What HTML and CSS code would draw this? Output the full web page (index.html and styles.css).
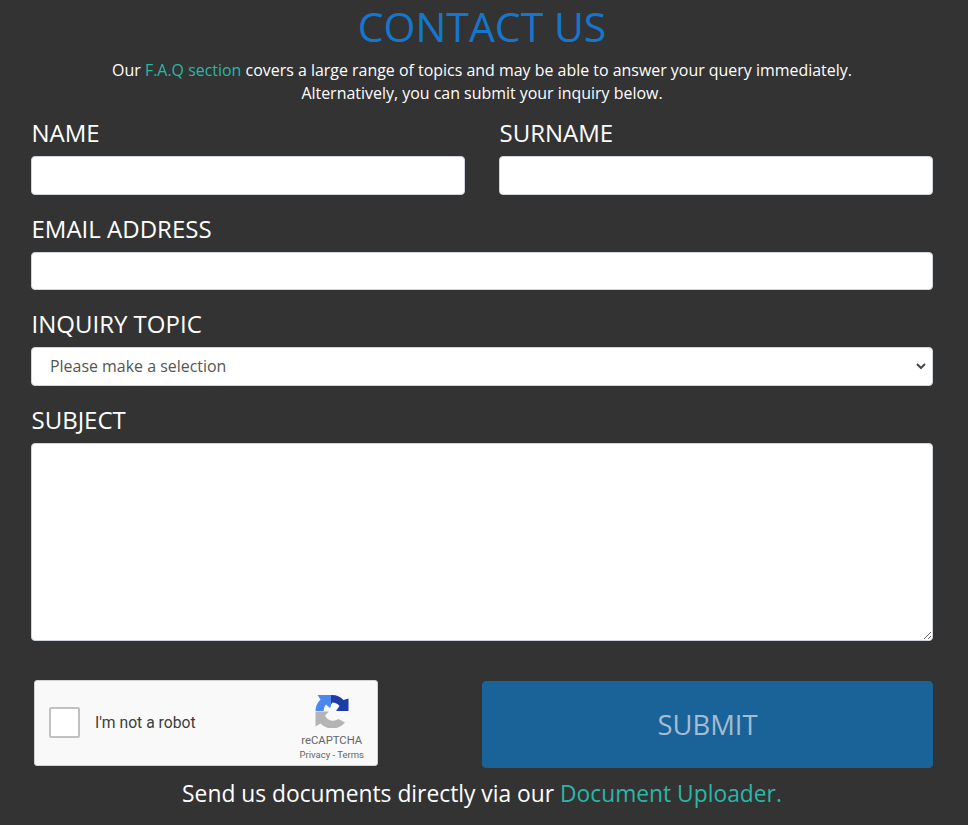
FILE: index.html
```html
<!DOCTYPE html>
<html>
<head>
<meta charset="utf-8">
<title>Contact Us</title>
<link rel="stylesheet" href="styles.css">
</head>
<body>

<div class="page">
  <h1 class="title">CONTACT US</h1>
  <p class="intro">Our <a href="#">F.A.Q section</a> covers a large range of topics and may be able to answer your query immediately.<br>Alternatively, you can submit your inquiry below.</p>

  <form class="contact">
    <div class="row">
      <div class="field">
        <label for="name">NAME</label>
        <input type="text" id="name">
      </div>
      <div class="field">
        <label for="surname">SURNAME</label>
        <input type="text" id="surname">
      </div>
    </div>

    <div class="field">
      <label for="email">EMAIL ADDRESS</label>
      <input type="text" id="email">
    </div>

    <div class="field">
      <label for="topic">INQUIRY TOPIC</label>
      <select id="topic">
        <option>Please make a selection</option>
      </select>
    </div>

    <div class="field">
      <label for="subject">SUBJECT</label>
      <textarea id="subject"></textarea>
    </div>

    <div class="bottom">
      <div class="captcha">
        <span class="checkbox"></span>
        <span class="robot">I'm not a robot</span>
        <div class="brand">
          <svg class="logo" width="34" height="34" viewBox="0 0 34 34">
            <path fill="#4a88ee" d="M0.500 17 A16.500 16.500 0 0 1 5.500 5.500 L2.500 1 L16 1 L16 12 L15 14 L11 10.500 A9 9 0 0 0 8.500 17 Z"/>
            <path fill="#1f3ca6" d="M16 1 A16 16 0 0 1 28.500 6 L33.500 4.500 L33.500 17 L21 17 L24.500 12 A9 9 0 0 0 17.500 8.500 L16 10.500 Z"/>
            <path fill="#b4b4b4" d="M0.500 17.500 L14 17.500 L10 21.500 A9 9 0 0 0 23.500 25 L30 28.500 A16.500 16.500 0 0 1 5.500 29.500 L0.500 32.500 Z"/>
          </svg>
          <span class="brand-name">reCAPTCHA</span>
          <span class="brand-links">Privacy - Terms</span>
        </div>
      </div>
      <button type="button" class="submit">SUBMIT</button>
    </div>
  </form>

  <p class="uploader">Send us documents directly via our <a href="#">Document Uploader.</a></p>
</div>

</body>
</html>
```

FILE: styles.css
```css
body {
  margin: 0;
  background-color: #333333;
  color: #ffffff;
  font-family: "Open Sans", sans-serif;
}

a {
  color: #2ab7a5;
  text-decoration: none;
}

.page {
  margin: 0 35px 0 31px;
}

.title {
  margin: 0;
  padding-top: 2px;
  text-align: center;
  color: #1576cc;
  font-size: 41px;
  font-weight: 400;
  line-height: 48px;
}

.intro {
  margin: 9px -10px 0 -10px;
  text-align: center;
  font-size: 15.95px;
  line-height: 23px;
}

.row {
  display: flex;
  gap: 34px;
  margin-top: 11px;
}

.row .field {
  flex: 1;
  margin-top: 0;
}

.field {
  margin-top: 17px;
}

.field label {
  display: block;
  padding-left: 0.5px;
  font-size: 24px;
  line-height: 34px;
  margin-bottom: 6px;
}

.field input,
.field select,
.field textarea {
  display: block;
  width: 100%;
  box-sizing: border-box;
  background-color: #ffffff;
  border: 1px solid #ced4da;
  border-radius: 4px;
  outline: none;
  margin: 0;
}

.field input {
  height: 38.5px;
}

.field select {
  height: 38.5px;
  padding: 0 12px 0 18px;
  color: #555555;
  font-family: "Open Sans", sans-serif;
  font-size: 15.95px;
  appearance: none;
  background-image: url("data:image/svg+xml,%3Csvg xmlns='http://www.w3.org/2000/svg' width='10' height='6' viewBox='0 0 10 6'%3E%3Cpath d='M1 1l4 4 4-4' fill='none' stroke='%23444' stroke-width='2'/%3E%3C/svg%3E");
  background-repeat: no-repeat;
  background-position: right 6px center;
}

.field textarea {
  height: 198px;
  resize: vertical;
}

.bottom {
  display: flex;
  justify-content: space-between;
  align-items: flex-start;
  margin-top: 39px;
  padding-left: 3px;
}

.captcha {
  display: flex;
  align-items: center;
  width: 344px;
  height: 86px;
  box-sizing: border-box;
  padding: 0 13px 0 14px;
  background-color: #f9f9f9;
  border: 1px solid #d3d3d3;
  border-radius: 3px;
  color: #3c3c3c;
  font-family: Roboto, sans-serif;
}

.checkbox {
  width: 31px;
  height: 31px;
  box-sizing: border-box;
  background-color: #ffffff;
  border: 2px solid #c1c1c1;
  border-radius: 2px;
}

.robot {
  margin-left: 15px;
  font-size: 15.7px;
}

.brand {
  display: flex;
  flex-direction: column;
  align-items: center;
  margin-left: auto;
  padding-top: 10px;
  color: #666666;
}

.brand-name {
  margin-top: 6px;
  font-size: 11.3px;
  line-height: 14px;
}

.brand-links {
  font-size: 9.5px;
  line-height: 14px;
}

.submit {
  width: 451px;
  height: 87px;
  margin-top: 1px;
  background-color: #1a6399;
  border: 1px solid #1a6399;
  border-radius: 4px;
  color: #a5bccf;
  font-family: "Open Sans", sans-serif;
  font-size: 27.4px;
}

.uploader {
  margin: 11px -10px 0 -10px;
  text-align: center;
  font-size: 22.8px;
  line-height: 30px;
}
```
